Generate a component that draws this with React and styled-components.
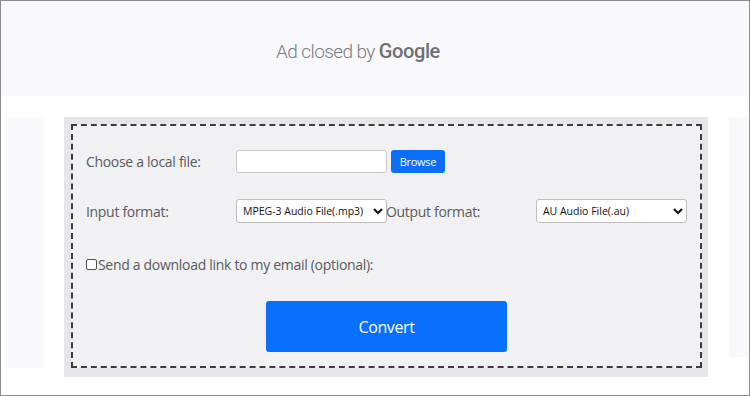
import styled, { createGlobalStyle } from 'styled-components';

const GlobalStyles = createGlobalStyle`
  * {
    box-sizing: border-box;
  }

  body {
    margin: 0;
    background: #ffffff;
    font-family: 'Open Sans', 'Noto Sans', sans-serif;
  }
`;

const Frame = styled.div`
  width: 750px;
  height: 396px;
  border: 1px solid #8c8c8c;
  overflow: hidden;
  background: #ffffff;
`;

const AdBar = styled.div`
  height: 95px;
  background: #f8f7fa;
  display: flex;
  align-items: center;
  justify-content: center;
  padding-right: 34px;
  padding-top: 5px;
`;

const AdText = styled.span`
  font-family: Roboto, 'Liberation Sans', sans-serif;
  font-size: 19px;
  font-weight: 300;
  color: #7b7b80;
  letter-spacing: -0.6px;
`;

const AdBrand = styled.span`
  font-family: Roboto, 'Liberation Sans', sans-serif;
  font-weight: 500;
  font-size: 20px;
  color: #707075;
  letter-spacing: -0.4px;
`;

const Content = styled.div`
  display: flex;
  align-items: flex-start;
  padding: 21px 0 0 3px;
`;

const SidePanel = styled.div`
  width: ${({ width }) => width}px;
  height: ${({ height }) => height}px;
  margin-left: ${({ offset }) => offset}px;
  background: #f9f8fa;
`;

const Main = styled.div`
  margin-left: 20px;
  width: 645px;
  background: #e6e5e8;
  padding: 7px 6px 9px 7px;
`;

const DashedBox = styled.div`
  border: 2px dashed #3c3c3e;
  background: #f1f0f3;
  padding: 10px 0 14px;
`;

const FormGrid = styled.div`
  margin-left: 13px;
  display: grid;
  grid-template-columns: 150px 150px 150px 150px;
  grid-template-rows: 50px 50px 53px;
  align-items: center;
`;

const Label = styled.span`
  font-size: 14px;
  letter-spacing: -0.3px;
  color: #5a5a5c;
  white-space: nowrap;
`;

const FileCell = styled.div`
  display: flex;
  align-items: center;
  grid-column: span 3;
`;

const FileBox = styled.input`
  width: 151px;
  height: 23px;
  border: 1px solid #c9c9cc;
  border-radius: 3px;
  background: #ffffff;
  outline: none;
`;

const BrowseButton = styled.button`
  margin-left: 4px;
  width: 54px;
  height: 23px;
  border: none;
  border-radius: 3px;
  background: #0b6ef6;
  color: #ffffff;
  font-family: 'Open Sans', sans-serif;
  font-size: 11px;
  letter-spacing: -0.3px;
  padding: 0;
`;

const Select = styled.select`
  width: 151px;
  height: 24px;
  border: 1px solid #bdbdc0;
  border-radius: 3px;
  background: #ffffff;
  color: #111;
  font-family: 'Open Sans', sans-serif;
  font-size: 10.5px;
  padding: 0 2px;
  outline: none;
`;

const CheckRow = styled.label`
  grid-column: span 4;
  display: flex;
  align-items: center;
  padding-top: 3px;
`;

const Checkbox = styled.input`
  appearance: none;
  width: 11px;
  height: 11px;
  margin: 1px 1px 0 0;
  border: 1px solid #505052;
  border-radius: 2px;
  background: #ffffff;
`;

const ConvertButton = styled.button`
  display: block;
  margin: 12px auto 0;
  width: 241px;
  height: 51px;
  border: none;
  border-radius: 3px;
  background: #0870fd;
  color: #ffffff;
  font-family: 'Open Sans', sans-serif;
  font-size: 16px;
  letter-spacing: -0.4px;
`;

export default function App() {
  return (
    <>
      <GlobalStyles />
      <Frame>
        <AdBar>
          <AdText>Ad closed by&nbsp;</AdText>
          <AdBrand>Google</AdBrand>
        </AdBar>
        <Content>
          <SidePanel width={40} height={251} offset={0} />
          <Main>
            <DashedBox>
              <FormGrid>
                <Label>Choose a local file:</Label>
                <FileCell>
                  <FileBox readOnly />
                  <BrowseButton>Browse</BrowseButton>
                </FileCell>
                <Label>Input format:</Label>
                <Select defaultValue="mp3">
                  <option value="mp3">MPEG-3 Audio File(.mp3)</option>
                </Select>
                <Label>Output format:</Label>
                <Select defaultValue="au">
                  <option value="au">AU Audio File(.au)</option>
                </Select>
                <CheckRow>
                  <Checkbox type="checkbox" />
                  <Label>Send a download link to my email (optional):</Label>
                </CheckRow>
              </FormGrid>
              <ConvertButton>Convert</ConvertButton>
            </DashedBox>
          </Main>
          <SidePanel width={20} height={240} offset={21} />
        </Content>
      </Frame>
    </>
  );
}
